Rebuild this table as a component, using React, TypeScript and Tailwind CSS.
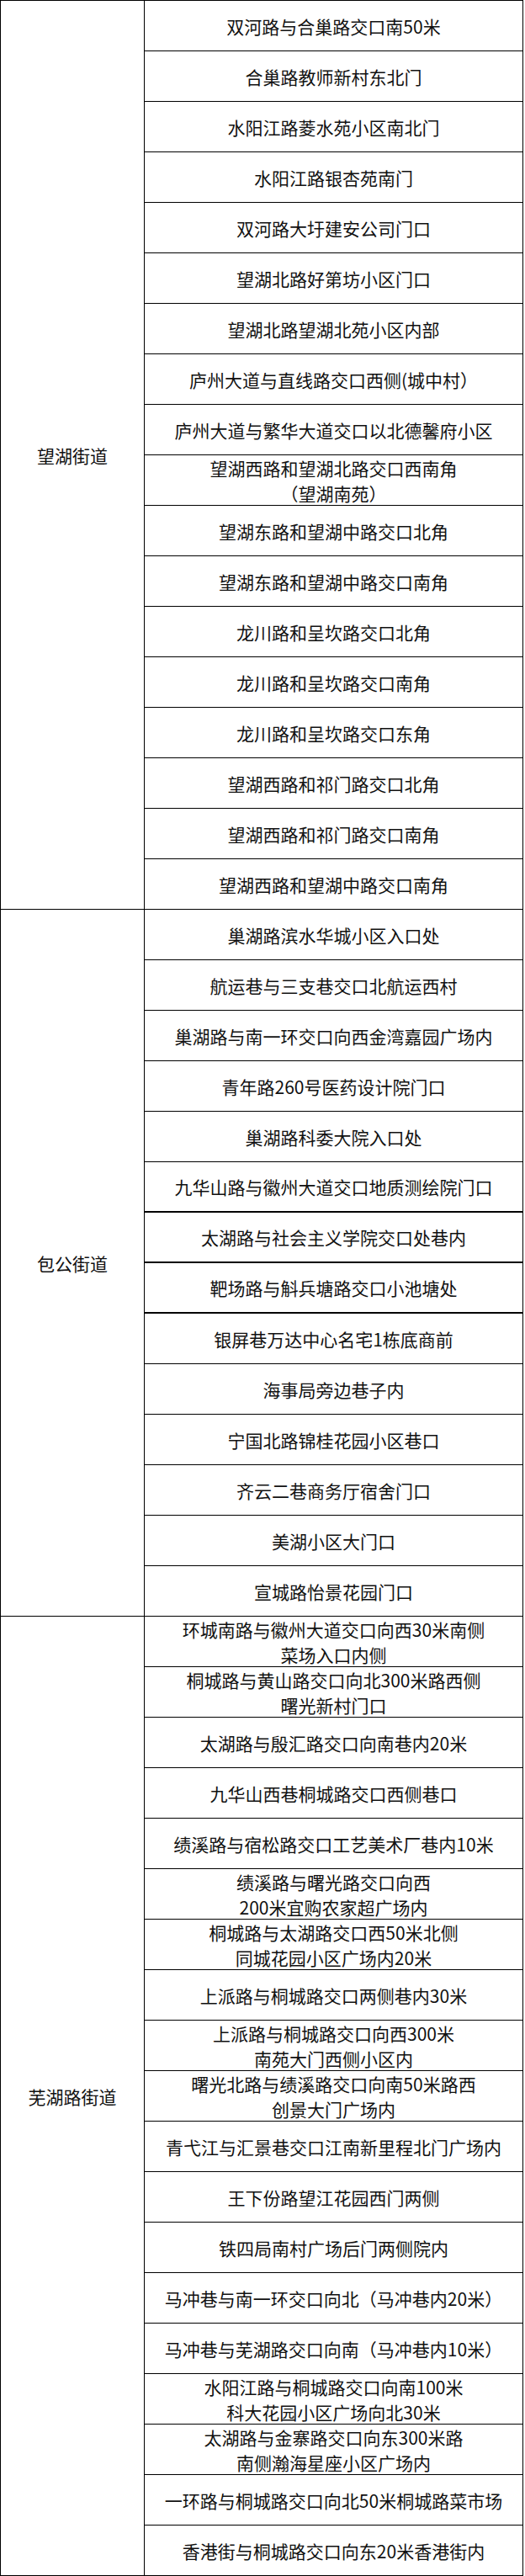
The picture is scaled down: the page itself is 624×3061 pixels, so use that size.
import React from "react";

interface Spot {
    lines: string[];
    thick?: boolean;
}

interface Street {
    name: string;
    spots: Spot[];
}

const one = (t: string, thick = false): Spot => ({ lines: [t], thick });
const two = (a: string, b: string): Spot => ({ lines: [a, b] });

const streets: Street[] = [
    {
        name: "望湖街道",
        spots: [
            one("双河路与合巢路交口南50米"),
            one("合巢路教师新村东北门"),
            one("水阳江路菱水苑小区南北门"),
            one("水阳江路银杏苑南门"),
            one("双河路大圩建安公司门口"),
            one("望湖北路好第坊小区门口"),
            one("望湖北路望湖北苑小区内部"),
            one("庐州大道与直线路交口西侧(城中村）"),
            one("庐州大道与繁华大道交口以北德馨府小区"),
            two("望湖西路和望湖北路交口西南角", "（望湖南苑）"),
            one("望湖东路和望湖中路交口北角"),
            one("望湖东路和望湖中路交口南角"),
            one("龙川路和呈坎路交口北角"),
            one("龙川路和呈坎路交口南角"),
            one("龙川路和呈坎路交口东角"),
            one("望湖西路和祁门路交口北角"),
            one("望湖西路和祁门路交口南角"),
            one("望湖西路和望湖中路交口南角"),
        ],
    },
    {
        name: "包公街道",
        spots: [
            one("巢湖路滨水华城小区入口处"),
            one("航运巷与三支巷交口北航运西村"),
            one("巢湖路与南一环交口向西金湾嘉园广场内"),
            one("青年路260号医药设计院门口"),
            one("巢湖路科委大院入口处"),
            one("九华山路与徽州大道交口地质测绘院门口", true),
            one("太湖路与社会主义学院交口处巷内", true),
            one("靶场路与斛兵塘路交口小池塘处", true),
            one("银屏巷万达中心名宅1栋底商前"),
            one("海事局旁边巷子内"),
            one("宁国北路锦桂花园小区巷口"),
            one("齐云二巷商务厅宿舍门口"),
            one("美湖小区大门口"),
            one("宣城路怡景花园门口"),
        ],
    },
    {
        name: "芜湖路街道",
        spots: [
            two("环城南路与徽州大道交口向西30米南侧", "菜场入口内侧"),
            two("桐城路与黄山路交口向北300米路西侧", "曙光新村门口"),
            one("太湖路与殷汇路交口向南巷内20米"),
            one("九华山西巷桐城路交口西侧巷口"),
            one("绩溪路与宿松路交口工艺美术厂巷内10米"),
            two("绩溪路与曙光路交口向西", "200米宜购农家超广场内"),
            two("桐城路与太湖路交口西50米北侧", "同城花园小区广场内20米"),
            one("上派路与桐城路交口两侧巷内30米"),
            two("上派路与桐城路交口向西300米", "南苑大门西侧小区内"),
            two("曙光北路与绩溪路交口向南50米路西", "创景大门广场内"),
            one("青弋江与汇景巷交口江南新里程北门广场内"),
            one("王下份路望江花园西门两侧"),
            one("铁四局南村广场后门两侧院内"),
            one("马冲巷与南一环交口向北（马冲巷内20米）"),
            one("马冲巷与芜湖路交口向南（马冲巷内10米）"),
            two("水阳江路与桐城路交口向南100米", "科大花园小区广场向北30米"),
            two("太湖路与金寨路交口向东300米路", "南侧瀚海星座小区广场内"),
            one("一环路与桐城路交口向北50米桐城路菜市场"),
            one("香港街与桐城路交口向东20米香港街内"),
        ],
    },
];

const App: React.FC = () => {
    return (
        <div className="bg-white min-h-screen font-['Noto_Sans_CJK_SC',sans-serif] text-[#111]">
            <div className="w-[622px] border-t border-l border-r border-black">
                {streets.map((street) => (
                    <div key={street.name} className="flex">
                        <div className="w-[171px] shrink-0 flex items-center justify-center border-r border-b border-black text-[21px] leading-[30px]">
                            {street.name}
                        </div>
                        <div className="flex-1 flex flex-col">
                            {street.spots.map((spot, i) => (
                                <div
                                    key={i}
                                    className={
                                        spot.thick
                                            ? "h-[60px] flex flex-col items-center justify-center border-b-2 border-black text-[21px] leading-[30px] whitespace-nowrap"
                                            : "h-[60px] flex flex-col items-center justify-center border-b border-black text-[21px] leading-[30px] whitespace-nowrap"
                                    }
                                >
                                    {spot.lines.map((line) => (
                                        <span key={line}>{line}</span>
                                    ))}
                                </div>
                            ))}
                        </div>
                    </div>
                ))}
            </div>
        </div>
    );
};

export default App;
